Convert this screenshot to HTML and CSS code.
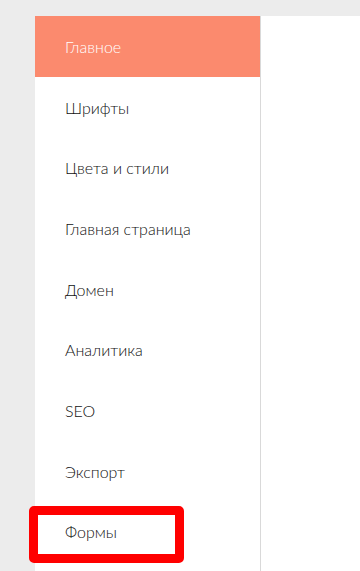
FILE: index.html
```html
<!DOCTYPE html>
<html lang="ru">
<head>
    <meta charset="UTF-8">
    <meta name="viewport" content="width=device-width, initial-scale=1.0">
    <title>Настройки сайта</title>
    <link rel="stylesheet" href="styles.css">
</head>
<body>
    <div class="page">
        <nav class="sidebar">
            <a class="item active" href="#">Главное</a>
            <a class="item" href="#">Шрифты</a>
            <a class="item" href="#">Цвета и стили</a>
            <a class="item" href="#">Главная страница</a>
            <a class="item" href="#">Домен</a>
            <a class="item" href="#">Аналитика</a>
            <a class="item" href="#">SEO</a>
            <a class="item" href="#">Экспорт</a>
            <a class="item marked" href="#">Формы</a>
        </nav>
        <div class="content"></div>
    </div>
</body>
</html>
```

FILE: styles.css
```css
html, body {
    margin: 0;
    height: 100%;
}
body {
    background: #ececec;
    font-family: Lato, "Noto Sans", sans-serif;
    overflow: hidden;
}
.page {
    display: flex;
    margin: 16px 0 0 35px;
    height: 555px;
    background: #fff;
}
.sidebar {
    width: 225px;
    flex-shrink: 0;
    border-right: 1px solid #d9d9d9;
    display: flex;
    flex-direction: column;
}
.item {
    position: relative;
    display: flex;
    align-items: center;
    height: 60.7px;
    padding-left: 30px;
    font-size: 16px;
    font-weight: 300;
    color: #111;
    text-decoration: none;
}
.item.active {
    background: #fb8a6e;
    color: #fff;
}
.content {
    flex: 1;
}

/* red annotation frame */
.item.marked::after {
    content: "";
    position: absolute;
    left: -6px;
    top: 4px;
    width: 137px;
    height: 39px;
    border: 9px solid #ff0000;
    border-radius: 5px;
}
```
